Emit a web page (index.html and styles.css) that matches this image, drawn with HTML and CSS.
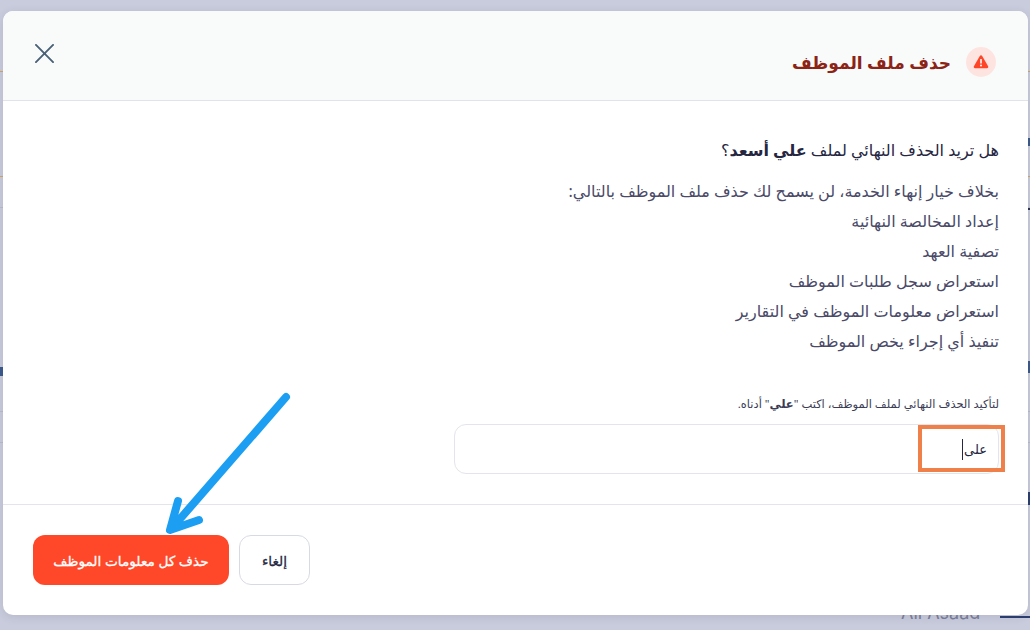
FILE: index.html
```html
<!DOCTYPE html>
<html lang="ar" dir="rtl">
<head>
    <meta charset="UTF-8" />
    <title>حذف ملف الموظف</title>
    <link rel="stylesheet" href="styles.css">
</head>
<body>

    <!-- الصفحة خلف النافذة -->
    <div class="page-behind">
        <div class="row row-a orange"></div>
        <div class="row row-b orange"></div>
        <div class="row row-c"></div>
        <div class="row row-d"></div>
        <div class="row row-e"></div>
        <span class="bit bit-1"></span>
        <span class="bit bit-2"></span>
        <span class="bit bit-3"></span>
        <span class="bit bit-4"></span>
        <span class="bit bit-5"></span>
        <span class="bit bit-6"></span>
        <span class="behind-name">Ali Asaad</span>
    </div>

    <div class="overlay">
        <div class="modal">
            <div class="modal-header">
                <div class="modal-title">
                    <span class="alert-icon">
                        <svg width="16" height="16" viewBox="0 0 16 16"><path d="M8 1.200c.5 0 .9.3 1.200.7l5.900 10.400c.5.900-.1 2-1.200 2H2.100c-1.100 0-1.700-1.100-1.200-2L6.800 1.900C7.100 1.500 7.500 1.200 8 1.200z" fill="#ff4528"/><rect x="7.200" y="5" width="1.600" height="4.600" rx=".6" fill="#fff"/><circle cx="8" cy="11.500" r="1" fill="#fff"/></svg>
                    </span>
                    <h2>حذف ملف الموظف</h2>
                </div>
                <button class="close-btn" type="button" aria-label="إغلاق">
                    <svg width="19" height="19" viewBox="0 0 20 20"><path d="M1 1l18 18M19 1L1 19" stroke="#4a6076" stroke-width="2" stroke-linecap="round"/></svg>
                </button>
            </div>

            <div class="modal-body">
                <p class="question">هل تريد الحذف النهائي لملف <strong>علي أسعد</strong>؟</p>
                <ul class="notes">
                    <li>بخلاف خيار إنهاء الخدمة، لن يسمح لك حذف ملف الموظف بالتالي:</li>
                    <li>إعداد المخالصة النهائية</li>
                    <li>تصفية العهد</li>
                    <li>استعراض سجل طلبات الموظف</li>
                    <li>استعراض معلومات الموظف في التقارير</li>
                    <li>تنفيذ أي إجراء يخص الموظف</li>
                </ul>
                <label class="confirm-label">لتأكيد الحذف النهائي لملف الموظف، اكتب "<strong>علي</strong>" أدناه.</label>
                <div class="confirm-input">
                    <span>على</span><i class="caret"></i>
                </div>
            </div>

            <div class="modal-footer">
                <button class="btn btn-cancel" type="button">إلغاء</button>
                <button class="btn btn-danger" type="button">حذف كل معلومات الموظف</button>
            </div>
        </div>
    </div>

    <!-- التعليمات فوق الصورة -->
    <div class="highlight-box"></div>
    <svg class="arrow" width="1030" height="630" viewBox="0 0 1030 630">
        <path d="M286 397L173 527M178 501L170 530L199 520" fill="none" stroke="#1c9ff2" stroke-width="8" stroke-linecap="round" stroke-linejoin="round"/>
    </svg>

</body>
</html>
```

FILE: styles.css
```css
* {
    margin: 0;
    padding: 0;
    box-sizing: border-box;
}
html, body {
    width: 1030px;
    height: 630px;
    overflow: hidden;
}
body {
    font-family: "Noto Sans", "DejaVu Sans", sans-serif;
    background: #c9ccdc;
    color: #1f2040;
}

/* page behind the dialog, only slivers of it show */
.page-behind {
    position: absolute;
    left: 0;
    top: 0;
    width: 1030px;
    height: 630px;
}
.row {
    border-bottom: 1px solid #b9bccd;
}
.row.orange {
    border-bottom-color: #d2a868;
}
.row-a { height: 72px; }
.row-b { height: 105px; }
.row-c { height: 31px; }
.row-d { height: 204px; }
.row-e { height: 31px; }
.bit {
    position: absolute;
    background: #3d5a8c;
}
.bit-1 { left: 1028px; top: 138px; width: 2px; height: 8px; }
.bit-2 { left: 1028px; top: 208px; width: 2px; height: 2px; background: #2c3350; }
.bit-3 { left: 1028px; top: 361px; width: 2px; height: 12px; }
.bit-4 { left: 1028px; top: 492px; width: 2px; height: 13px; background: #2c3f70; }
.bit-5 { left: 0; top: 367px; width: 3px; height: 9px; }
.bit-6 { left: 1000px; top: 616px; width: 30px; height: 2px; background: #2c3f70; }
.behind-name {
    position: absolute;
    left: 901px;
    top: 602px;
    font-family: "Inter", sans-serif;
    font-size: 18px;
    color: #7c809a;
}

.overlay {
    position: absolute;
    left: 0;
    top: 0;
    width: 1030px;
    height: 630px;
    padding: 11px 2px 15px 3px;
}
.modal {
    height: 100%;
    display: flex;
    flex-direction: column;
    background: #fff;
    border-radius: 10px;
    overflow: hidden;
    box-shadow: 0 2px 10px rgba(40, 44, 80, 0.12);
}
.modal-header {
    height: 90px;
    display: flex;
    justify-content: space-between;
    align-items: center;
    padding-right: 32px;
    background: #f9fbfb;
    border-bottom: 1px solid #e1e3ea;
}
.modal-title {
    display: flex;
    align-items: center;
    gap: 15px;
    margin-top: 13px;
}
.alert-icon {
    width: 30px;
    height: 30px;
    border-radius: 50%;
    background: #fee4e0;
    display: flex;
    align-items: center;
    justify-content: center;
}
h2 {
    font-size: 17px;
    font-weight: 700;
    color: #8b2316;
}
.close-btn {
    background: none;
    border: none;
    margin-left: 32px;
    margin-bottom: 5px;
    display: flex;
}
.modal-body {
    flex: 1;
    padding: 35px 29px 0 0;
}
.question {
    font-size: 16px;
    line-height: 28px;
    color: #25263f;
}
.notes {
    list-style: none;
    margin-top: 12px;
    font-size: 16px;
    line-height: 30px;
    color: #4a4a68;
}
.confirm-label {
    display: block;
    margin-top: 38px;
    font-size: 11.5px;
    line-height: 20px;
    color: #3b3c56;
}
.confirm-input {
    width: 545px;
    height: 50px;
    margin-top: 10px;
    display: flex;
    align-items: center;
    padding-right: 11px;
    border: 1px solid #e3e5ea;
    border-radius: 12px;
    font-size: 13px;
    color: #25263f;
}
.caret {
    width: 1px;
    height: 21px;
    margin-right: 1px;
    background: #25263f;
}
.modal-footer {
    height: 111px;
    display: flex;
    justify-content: flex-end;
    gap: 10px;
    padding: 30px 0 0 30px;
    border-top: 1px solid #e3e5ea;
}
.btn {
    height: 50px;
    border-radius: 12px;
    font-family: inherit;
    font-size: 13.7px;
    font-weight: 400;
    -webkit-text-stroke: 0.3px currentColor;
}
.btn-cancel {
    width: 71px;
    background: #fff;
    border: 1px solid #d8dae3;
    color: #25263f;
}
.btn-danger {
    width: 196px;
    background: #ff4729;
    border: none;
    color: #fff;
}

/* annotation marks on top of the screenshot */
.highlight-box {
    position: absolute;
    left: 918px;
    top: 425px;
    width: 87px;
    height: 47px;
    border: 4px solid #f0804a;
}
.arrow {
    position: absolute;
    left: 0;
    top: 0;
}
```
